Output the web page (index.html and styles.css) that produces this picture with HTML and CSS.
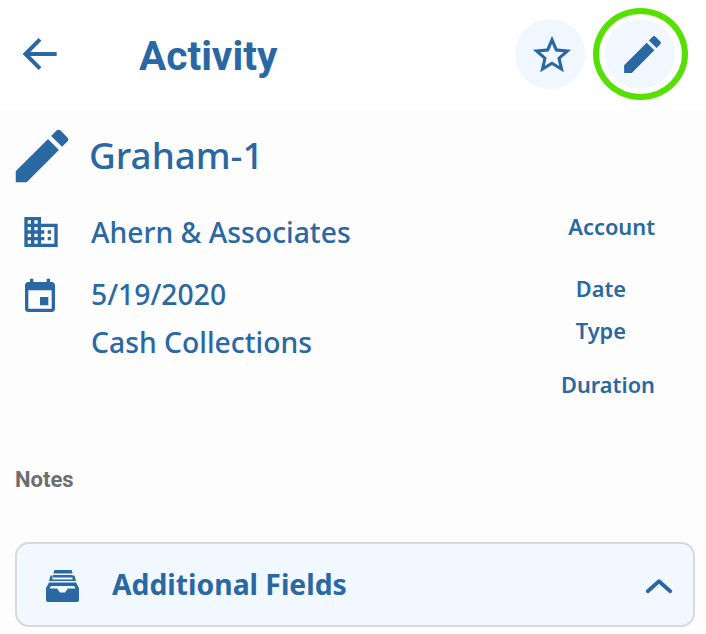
FILE: index.html
```html
<!DOCTYPE html>
<html lang="en">
<head>
    <meta charset="UTF-8">
    <meta name="viewport" content="width=device-width, initial-scale=1.0">
    <title>Activity</title>
    <link rel="stylesheet" href="styles.css">
</head>
<body>

<header class="top-bar">
    <button class="back-btn" aria-label="Back">
        <svg viewBox="0 0 24 24" class="back-icon"><path d="M20 12H5M12 5l-7 7 7 7"/></svg>
    </button>
    <h1 class="page-title">Activity</h1>
    <div class="top-actions">
        <button class="round-btn" aria-label="Favorite">
            <svg viewBox="0 0 24 24" class="star-icon"><path d="M22 9.24l-7.19-.62L12 2 9.19 8.63 2 9.24l5.46 4.73L5.82 21 12 17.27 18.18 21l-1.63-7.03L22 9.24zM12 15.4l-3.76 2.27 1-4.28-3.32-2.88 4.38-.38L12 6.1l1.71 4.04 4.38.38-3.32 2.88 1 4.28L12 15.4z"/></svg>
        </button>
        <button class="round-btn round-btn-marked" aria-label="Edit">
            <svg viewBox="0 0 24 24" class="edit-icon"><path d="M3 17.25V21h3.75L17.81 9.94l-3.75-3.75L3 17.25zM20.71 7.04c.39-.39.39-1.02 0-1.41l-2.34-2.34c-.39-.39-1.02-.39-1.41 0l-1.83 1.83 3.75 3.75 1.83-1.83z"/></svg>
        </button>
    </div>
</header>

<main class="content">
    <div class="name-row">
        <svg viewBox="0 0 24 24" class="name-icon"><path d="M3 17.25V21h3.75L17.81 9.94l-3.75-3.75L3 17.25zM20.71 7.04c.39-.39.39-1.02 0-1.41l-2.34-2.34c-.39-.39-1.02-.39-1.41 0l-1.83 1.83 3.75 3.75 1.83-1.83z"/></svg>
        <h2 class="name">Graham-1</h2>
    </div>

    <div class="details">
        <div class="values">
            <div class="value-row">
                <svg viewBox="0 0 24 24" class="row-icon building-icon"><path d="M12 7V3H2v18h20V7H12zM6 19H4v-2h2v2zm0-4H4v-2h2v2zm0-4H4V9h2v2zm0-4H4V5h2v2zm4 12H8v-2h2v2zm0-4H8v-2h2v2zm0-4H8V9h2v2zm0-4H8V5h2v2zm10 12h-8v-2h2v-2h-2v-2h2v-2h-2V9h8v10zm-2-8h-2v2h2v-2zm0 4h-2v2h2v-2z"/></svg>
                <span>Ahern &amp; Associates</span>
            </div>
            <div class="value-row row-date">
                <svg viewBox="0 0 24 24" class="row-icon calendar-icon"><path d="M17 12h-5v5h5v-5zM16 1v2H8V1H6v2H5c-1.11 0-1.99.9-1.99 2L3 19c0 1.1.89 2 2 2h14c1.1 0 2-.9 2-2V5c0-1.1-.9-2-2-2h-1V1h-2zm3 18H5V8h14v11z"/></svg>
                <span>5/19/2020</span>
            </div>
            <div class="value-row row-type">
                <span>Cash Collections</span>
            </div>
        </div>
        <div class="labels">
            <span class="label-account">Account</span>
            <span class="label-date">Date</span>
            <span class="label-type">Type</span>
            <span class="label-duration">Duration</span>
        </div>
    </div>

    <div class="notes-label">Notes</div>

    <div class="panel">
        <svg viewBox="0 0 33 32" class="panel-icon"><path fill-rule="evenodd" d="M8 1Q8 0 9 0H25Q26 0 26 1L26.5 3.5H7.5ZM7 5H26.5V7.5H7ZM4.5 5.5H6.5V9.5H26.5V5.5H28.5L30 11H3ZM3 12.5H30L33 18V30Q33 32 31 32H2Q0 32 0 30V18ZM5 16L3.5 18.5H11L14 22.5H19L22 18.5H29.5L28 16Z"/></svg>
        <span class="panel-title">Additional Fields</span>
        <svg viewBox="0 0 24 24" class="chevron"><path d="M3 17l9-8 9 8"/></svg>
    </div>
</main>

</body>
</html>
```

FILE: styles.css
```css
*, *::after {
    box-sizing: border-box;
}
html, body {
    height: 100%;
}
body {
    margin: 0;
    background-color: #fdfdfd;
    color: #2968a2;
    font-family: "Noto Sans", sans-serif;
    overflow: hidden;
}
svg {
    fill: #2968a2;
    flex-shrink: 0;
}
button {
    border: none;
    background: none;
    padding: 0;
    cursor: pointer;
}

.top-bar {
    display: flex;
    align-items: center;
    height: 110px;
    padding-bottom: 2px;
    background-color: #fff;
}
.back-btn {
    display: flex;
    margin-left: 15px;
}
.back-icon {
    width: 50px;
    height: 50px;
    fill: none;
    stroke: #2968a2;
    stroke-width: 1.9;
}
.page-title {
    margin: 3px 0 0 74px;
    font-family: Roboto, sans-serif;
    font-size: 40.6px;
    font-weight: 700;
}
.top-actions {
    display: flex;
    gap: 20px;
    margin-left: auto;
    margin-right: 31px;
}
.round-btn {
    position: relative;
    display: flex;
    align-items: center;
    justify-content: center;
    width: 70px;
    height: 70px;
    border-radius: 50%;
    background-color: #f0f7ff;
}
.round-btn-marked::after {
    content: "";
    position: absolute;
    top: -11px;
    left: -12px;
    width: 95px;
    height: 92px;
    border: 6px solid #55e000;
    border-radius: 50%;
}
.star-icon {
    width: 46px;
    height: 46px;
    margin: 2px 0 0 3px;
}
.edit-icon {
    width: 49px;
    height: 49px;
    margin-left: 4px;
}

.name-row {
    display: flex;
    align-items: center;
    padding-left: 7px;
    height: 92px;
}
.name-icon {
    width: 70px;
    height: 70px;
}
.name {
    margin: 0 0 2px 12px;
    font-size: 36.8px;
    font-weight: 500;
}

.details {
    display: flex;
    justify-content: space-between;
    height: 265px;
    padding: 6px 51px 0 0;
}
.value-row {
    display: flex;
    align-items: center;
    height: 48px;
    padding-left: 20px;
    font-size: 28.3px;
    font-weight: 500;
}
.row-icon {
    width: 40px;
    height: 40px;
}
.building-icon {
    margin: 0 30px 0 1px;
}
.calendar-icon {
    margin: 6px 31px 0 0;
}
.row-date {
    margin-top: 14px;
}
.row-type {
    padding-left: 91px;
}
.labels {
    display: flex;
    flex-direction: column;
    align-items: flex-end;
    font-size: 21.8px;
    line-height: 30px;
    font-weight: 600;
}
.label-account {
    margin-top: 4px;
}
.label-date {
    margin-top: 32px;
    margin-right: 29px;
}
.label-type {
    margin-top: 12px;
    margin-right: 29px;
}
.label-duration {
    margin-top: 24px;
}

.notes-label {
    margin-left: 15px;
    font-family: Roboto, sans-serif;
    font-size: 22px;
    font-weight: 700;
    color: #6d6d70;
}

.panel {
    display: flex;
    align-items: center;
    height: 85px;
    margin: 50px 11px 0 15px;
    padding: 0 19px 0 29px;
    background-color: #f1f8ff;
    border: 2px solid #d9d9d9;
    border-radius: 14px;
}
.panel-icon {
    width: 33px;
    height: 32px;
    margin-top: 2px;
}
.panel-title {
    margin: 0 0 2px 33px;
    font-size: 28.3px;
    font-weight: 700;
}
.chevron {
    width: 30px;
    height: 30px;
    margin-left: auto;
    fill: none;
    stroke: #2968a2;
    stroke-width: 3;
    stroke-linecap: round;
    stroke-linejoin: round;
}
```
